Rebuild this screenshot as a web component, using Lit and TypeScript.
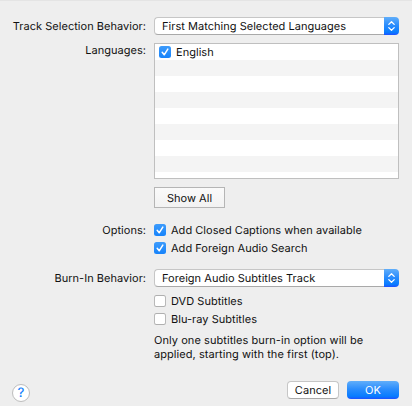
import { LitElement, html, css, svg } from "lit";
import { customElement, property } from "lit/decorators.js";

@customElement("mac-check")
class MacCheck extends LitElement {
  @property({ type: Boolean }) checked = false;
  @property() label = "";
  static styles = css`
    :host { display: flex; align-items: center; height: 18px; }
    .box { box-sizing: border-box; flex: none; width: 12px; height: 12px; border-radius: 2.5px; background: #fff; border: 1px solid #b9b9b9; border-top-color: #b0b0b0; border-bottom-color: #b0b0b0; }
    .box.on { border: 0; background: linear-gradient(#3d9bfb, #1683fb); }
    svg { display: block; }
    .text { margin-left: 5px; white-space: nowrap; }
  `;
  render() {
    return html`<span class="box ${this.checked ? "on" : ""}">${this.checked
      ? html`<svg width="12" height="12" viewBox="0 0 12 12">${svg`<path d="M3.2 6.3 5.2 8.8 8.8 3.1" fill="none" stroke="#fff" stroke-width="1.5" stroke-linecap="round" stroke-linejoin="round"/>`}</svg>`
      : ""}</span><span class="text">${this.label}</span>`;
  }
}

@customElement("mac-popup")
class MacPopup extends LitElement {
  @property() value = "";
  static styles = css`
    :host { display: flex; box-sizing: border-box; width: 245px; height: 18px; }
    .field { box-sizing: border-box; flex: 1; height: 18px; padding-left: 7px; line-height: 16px; white-space: nowrap; background: #fff; border: 1px solid #c6c6c6; border-bottom-color: #a9a9a9; border-right: 0; border-radius: 4px 0 0 4px; }
    .arrows { width: 15px; height: 18px; border-radius: 0 4px 4px 0; background: linear-gradient(#60aefa, #2b8dfd 45%, #087cff 85%, #1f51ff); }
    svg { display: block; }
  `;
  render() {
    return html`<span class="field">${this.value}</span><span class="arrows"><svg width="15" height="18" viewBox="0 0 15 18"><path d="M4.8 7.4 7.5 4.8 10.2 7.4M4.8 10.6 7.5 13.2 10.2 10.6" fill="none" stroke="#fff" stroke-width="1.3" stroke-linecap="round" stroke-linejoin="round"/></svg></span>`;
  }
}

@customElement("app-root")
class AppRoot extends LitElement {
  static styles = css`
    :host { display: flex; flex-direction: column; box-sizing: border-box; width: 412px; height: 406px; padding-top: 16px; border-top: 1px solid #e4e4e4; background: #eee; color: #111; font: 11px/14px Inter, "Liberation Sans", sans-serif; letter-spacing: 0.03px; text-rendering: geometricPrecision; overflow: hidden; }
    .row { display: grid; grid-template-columns: 146px 245px; column-gap: 8px; }
    .label { text-align: right; white-space: nowrap; line-height: 18px; }
    .languages { margin-top: 8px; }
    .languages .label { line-height: 15px; }
    .list { box-sizing: border-box; height: 136px; border: 1px solid #bfbfbf; background: repeating-linear-gradient(#fff 0 16px, #f4f4f4 16px 32px); }
    .list mac-check { height: 16px; padding-left: 4px; }
    .button { box-sizing: border-box; border: 1px solid #b5b5b5; text-align: center; background: linear-gradient(#fafafa, #f2f2f2); }
    .show { width: 71px; height: 21px; margin: 8px 0 0 154px; line-height: 20px; }
    .options { margin-top: 13px; }
    .burn { margin-top: 12px; }
    .burn mac-popup { margin-bottom: 5px; }
    .note { margin-top: 5px; line-height: 14px; white-space: nowrap; letter-spacing: 0.06px; }
    .footer { display: flex; align-items: center; margin-top: 20px; padding: 0 13px 0 12px; height: 18px; }
    .help { box-sizing: border-box; width: 18px; height: 18px; border: 1px solid #bdbdbd; border-radius: 50%; background: #fff; color: #1582fc; font-size: 13px; line-height: 16px; font-weight: 500; text-align: center; margin: 6px auto 0 0; }
    .cancel { width: 52px; height: 18px; line-height: 16px; border-color: #c6c6c6; border-bottom-color: #a9a9a9; border-radius: 4px; background: #fff; }
    .ok { width: 52px; height: 18px; line-height: 18px; margin-left: 8px; border: 0; border-radius: 4px; color: #fff; background: linear-gradient(#60aefa, #2b8dfd 45%, #087cff 85%, #1f51ff); }
  `;
  render() {
    return html`
      <div class="row"><span class="label">Track Selection Behavior:</span><mac-popup value="First Matching Selected Languages"></mac-popup></div>
      <div class="row languages"><span class="label">Languages:</span><div class="list"><mac-check checked label="English"></mac-check></div></div>
      <div class="button show">Show All</div>
      <div class="row options"><span class="label">Options:</span><div><mac-check checked label="Add Closed Captions when available"></mac-check><mac-check checked label="Add Foreign Audio Search"></mac-check></div></div>
      <div class="row burn"><span class="label">Burn-In Behavior:</span><div><mac-popup value="Foreign Audio Subtitles Track"></mac-popup><mac-check label="DVD Subtitles"></mac-check><mac-check label="Blu-ray Subtitles"></mac-check><div class="note">Only one subtitles burn-in option will be<br />applied, starting with the first (top).</div></div></div>
      <div class="footer"><span class="help">?</span><span class="button cancel">Cancel</span><span class="button ok">OK</span></div>
    `;
  }
}
